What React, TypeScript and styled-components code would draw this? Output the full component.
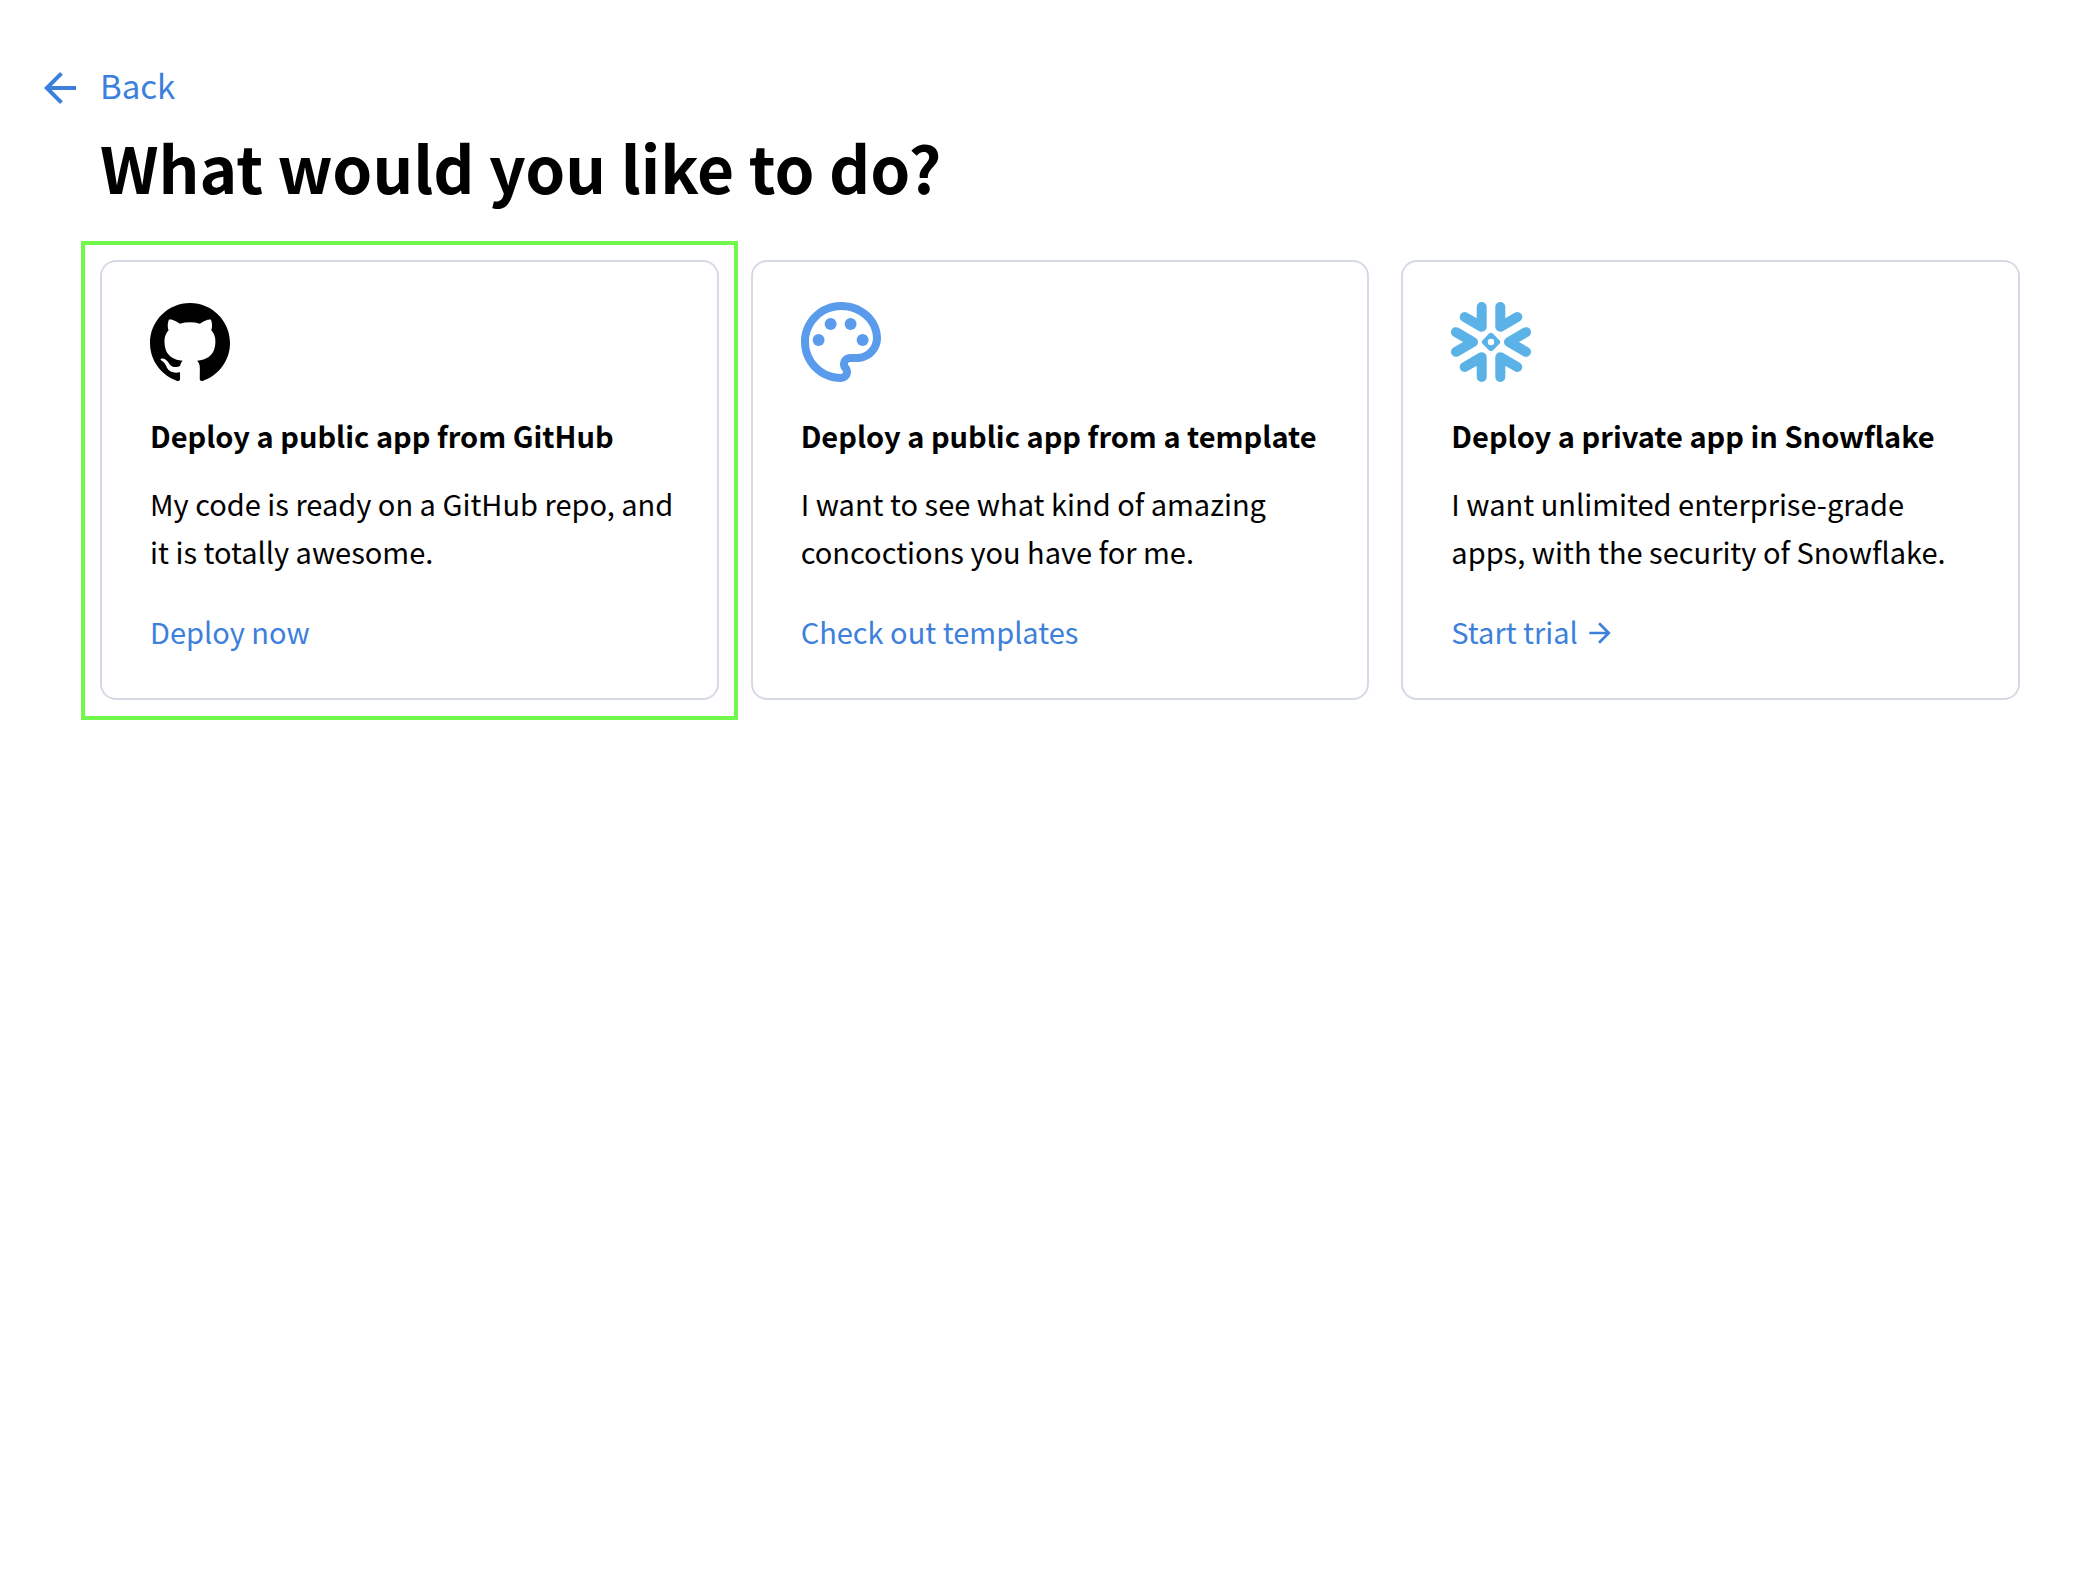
import React from "react";
import styled, { createGlobalStyle } from "styled-components";
import { SiGithub } from "react-icons/si";

const GlobalStyle = createGlobalStyle`
  *, *::before, *::after { box-sizing: border-box; }
  body {
    margin: 0;
    background: #fff;
    color: #000;
    font-family: "Source Sans Pro", "Noto Sans CJK SC", "Noto Sans", sans-serif;
  }
`;

const Page = styled.main`
  padding: 64px 64px 64px 36px;
`;

const BackLink = styled.a`
  display: inline-flex;
  align-items: flex-start;
  gap: 16px;
  color: #3d80dc;
  font-size: 33px;
  line-height: 42px;
  text-decoration: none;
  vertical-align: top;
`;

const Icon = styled.svg<{ $size: number }>`
  display: block;
  flex: none;
  width: ${(p) => p.$size}px;
  height: ${(p) => p.$size}px;
  fill: currentColor;
`;

const Content = styled.section`
  padding: 12px 0 0 64px;
`;

const Heading = styled.h1`
  margin: 0 0 52px;
  font-size: 64px;
  line-height: 84px;
  font-weight: 700;
`;

const Cards = styled.div`
  display: grid;
  grid-template-columns: repeat(3, minmax(0, 1fr));
  gap: 32px;
`;

const Card = styled.article`
  position: relative;
  display: flex;
  flex-direction: column;
  align-items: flex-start;
  padding: 40px 36px 43px 48px;
  border: 2px solid #d5dae5;
  border-radius: 16px;
`;

const Highlight = styled.span`
  position: absolute;
  inset: -21px -21px -22px;
  border: 4px solid #72f74c;
  pointer-events: none;
`;

const CardIcon = styled.div<{ $color: string }>`
  display: flex;
  margin-bottom: 29px;
  color: ${(p) => p.$color};
`;

const CardTitle = styled.h2`
  margin: 0 0 20px;
  font-size: 29px;
  line-height: 48px;
  font-weight: 700;
`;

const CardText = styled.p`
  margin: 0 0 32px;
  font-size: 29px;
  line-height: 48px;
`;

const CardLink = styled.a`
  display: inline-flex;
  align-items: center;
  gap: 6px;
  color: #3d80dc;
  font-size: 29px;
  line-height: 48px;
  text-decoration: none;

  svg {
    margin-top: 4px;
  }
`;

const PaletteIcon = () => (
  <Icon $size={80} viewBox="2 2 20 20" aria-hidden="true">
    <path d="M12 22C6.49 22 2 17.51 2 12S6.49 2 12 2s10 4.04 10 9c0 3.31-2.69 6-6 6h-1.77c-.28 0-.5.22-.5.5 0 .12.05.23.13.33.41.47.64 1.06.64 1.67A2.5 2.5 0 0 1 12 22zm0-18c-4.41 0-8 3.59-8 8s3.59 8 8 8c.28 0 .5-.22.5-.5a.54.54 0 0 0-.14-.35c-.41-.46-.63-1.05-.63-1.65a2.5 2.5 0 0 1 2.5-2.5H16c2.21 0 4-1.79 4-4 0-3.86-3.59-7-8-7z" />
    <circle cx="6.4" cy="11.5" r="1.5" />
    <circle cx="9.4" cy="7.5" r="1.5" />
    <circle cx="14.4" cy="7.5" r="1.5" />
    <circle cx="17.4" cy="11.5" r="1.5" />
  </Icon>
);

const SnowflakeIcon = () => (
  <Icon $size={80} viewBox="0 0 80 80" aria-hidden="true">
    <g fill="none" stroke="currentColor" strokeWidth="10" strokeLinecap="round" strokeLinejoin="round">
      <path d="M30.7 5V24.8L13.7 15" />
      <path d="M49.3 5V24.8L66.3 15" />
      <path d="M30.7 75V55.2L13.7 65" />
      <path d="M49.3 75V55.2L66.3 65" />
      <path d="M5 30.2L22 40L5 49.8" />
      <path d="M75 30.2L58 40L75 49.8" />
    </g>
    <path
      fillRule="evenodd"
      d="M37.9 31.8A3 3 0 0 1 42.1 31.8L48.2 37.9A3 3 0 0 1 48.2 42.1L42.1 48.2A3 3 0 0 1 37.9 48.2L31.8 42.1A3 3 0 0 1 31.8 37.9ZM40 36.8a3.2 3.2 0 1 0 0 6.4 3.2 3.2 0 0 0 0-6.4Z"
    />
  </Icon>
);

const ArrowLeft = () => (
  <Icon $size={48} viewBox="0 0 24 24" aria-hidden="true">
    <path d="M20 11H7.83l5.59-5.59L12 4l-8 8 8 8 1.41-1.41L7.83 13H20v-2z" />
  </Icon>
);

const ArrowRight = () => (
  <Icon $size={32} viewBox="0 0 24 24" aria-hidden="true">
    <path d="M12 4l-1.41 1.41L16.17 11H4v2h12.17l-5.58 5.59L12 20l8-8z" />
  </Icon>
);

type Option = {
  icon: React.ReactNode;
  color: string;
  title: string;
  text: string;
  link: string;
  href: string;
  highlighted?: boolean;
  arrow?: boolean;
};

const options: Option[] = [
  {
    icon: <SiGithub size={80} aria-hidden="true" />,
    color: "#000",
    title: "Deploy a public app from GitHub",
    text: "My code is ready on a GitHub repo, and it is totally awesome.",
    link: "Deploy now",
    href: "#deploy",
    highlighted: true,
  },
  {
    icon: <PaletteIcon />,
    color: "#5a9bec",
    title: "Deploy a public app from a template",
    text: "I want to see what kind of amazing concoctions you have for me.",
    link: "Check out templates",
    href: "#templates",
  },
  {
    icon: <SnowflakeIcon />,
    color: "#5bb2e6",
    title: "Deploy a private app in Snowflake",
    text: "I want unlimited enterprise-grade apps, with the security of Snowflake.",
    link: "Start trial",
    href: "#trial",
    arrow: true,
  },
];

export default function App() {
  return (
    <>
      <GlobalStyle />
      <Page>
        <BackLink href="#back">
          <ArrowLeft />
          Back
        </BackLink>
        <Content>
          <Heading>What would you like to do?</Heading>
          <Cards>
            {options.map((o) => (
              <Card key={o.title}>
                {o.highlighted && <Highlight />}
                <CardIcon $color={o.color}>{o.icon}</CardIcon>
                <CardTitle>{o.title}</CardTitle>
                <CardText>{o.text}</CardText>
                <CardLink href={o.href}>
                  {o.link}
                  {o.arrow && <ArrowRight />}
                </CardLink>
              </Card>
            ))}
          </Cards>
        </Content>
      </Page>
    </>
  );
}
